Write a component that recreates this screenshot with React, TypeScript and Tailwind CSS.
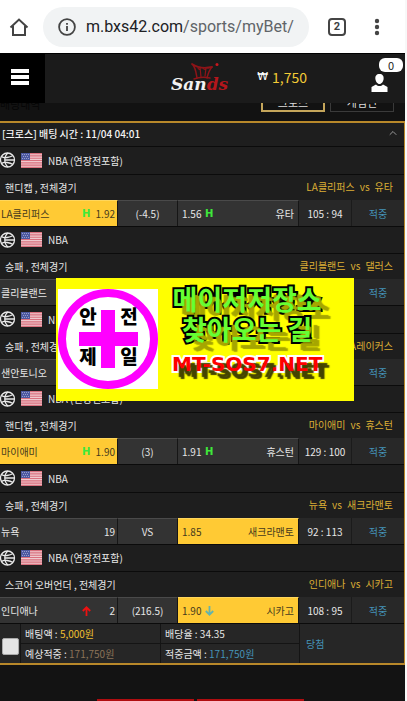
import clsx from "clsx";
import { ChevronUp } from "lucide-react";

type Mark = "H" | "up" | "down";

type Side = {
    name: string;
    value?: string;
    mark?: Mark;
    picked?: boolean;
};

type Match = {
    league: string;
    kind: string;
    home: Side;
    line?: string;
    away: Side;
    score?: string;
};

const matches: Match[] = [
    {
        league: "NBA (연장전포함)",
        kind: "핸디캡 , 전체경기",
        home: { name: "LA클리퍼스", value: "1.92", mark: "H", picked: true },
        line: "(-4.5)",
        away: { name: "유타", value: "1.56", mark: "H" },
        score: "105 : 94",
    },
    {
        league: "NBA",
        kind: "승패 , 전체경기",
        home: { name: "클리블랜드" },
        away: { name: "댈러스" },
    },
    {
        league: "NBA",
        kind: "승패 , 전체경기",
        home: { name: "샌안토니오" },
        away: { name: "LA레이커스" },
    },
    {
        league: "NBA (연장전포함)",
        kind: "핸디캡 , 전체경기",
        home: { name: "마이애미", value: "1.90", mark: "H", picked: true },
        line: "(3)",
        away: { name: "휴스턴", value: "1.91", mark: "H" },
        score: "129 : 100",
    },
    {
        league: "NBA",
        kind: "승패 , 전체경기",
        home: { name: "뉴욕", value: "19" },
        line: "VS",
        away: { name: "새크라맨토", value: "1.85", picked: true },
        score: "92 : 113",
    },
    {
        league: "NBA (연장전포함)",
        kind: "스코어 오버언더 , 전체경기",
        home: { name: "인디애나", value: "2", mark: "up" },
        line: "(216.5)",
        away: { name: "시카고", value: "1.90", mark: "down", picked: true },
        score: "108 : 95",
    },
];

function BrowserBar() {
    return (
        <div className="flex h-[53px] items-center bg-white pl-[9px] font-[Roboto,sans-serif] text-[#3c4043]">
            <button type="button" aria-label="Home" className="shrink-0">
                <svg width="20" height="20" viewBox="0 0 20 20" fill="none" stroke="#444" strokeWidth="2">
                    <path d="M1.5 10.5 10 2.500l8.500 8M4 9v9h12V9" />
                </svg>
            </button>
            <a href="#url" className="ml-3.5 flex h-10 min-w-0 flex-1 items-center gap-2.5 rounded-full bg-[#f1f3f4] pl-[15px]">
                <svg width="18" height="18" viewBox="0 0 18 18" fill="none" stroke="#444" className="shrink-0">
                    <circle cx="9" cy="9" r="7.900" strokeWidth="1.800" />
                    <path d="M9 8v5M9 5v1.800" strokeWidth="1.800" />
                </svg>
                <span className="text-base whitespace-nowrap text-[#606468]">
                    <span className="text-[#202124]">m.bxs42.com</span>/sports/myBet/
                </span>
            </a>
            <button type="button" className="ml-[19px] size-[18px] shrink-0 rounded-[4px] border-2 border-[#444] text-[11px] leading-[14px] font-bold">
                2
            </button>
            <button type="button" aria-label="Menu" className="mr-[25px] ml-7 shrink-0">
                <svg width="6" height="18" viewBox="0 0 6 18" fill="#444">
                    <circle cx="3" cy="3" r="2.200" />
                    <circle cx="3" cy="9" r="2.200" />
                    <circle cx="3" cy="15" r="2.200" />
                </svg>
            </button>
        </div>
    );
}

function Logo() {
    return (
        <svg width="62" height="34" viewBox="0 0 62 34" role="img" aria-label="Sands">
            <g fill="none" stroke="#8e1418" strokeLinecap="round">
                <path d="M21 2c5 3.500 13 4.500 20 3" strokeWidth="1.800" />
                <path d="M22 3c3 4 3 8 4 13M41 5c-3 3-4 7-5 11" strokeWidth="1.500" />
                <path d="M29 5l1 10M35 6l-1 8M27 6c1 2 2 2 2 0M32 6c1 2 3 2 3 0" strokeWidth="1.200" />
                <path d="M23 17c5-2 11-2 16-1" strokeWidth="1.400" />
            </g>
            <circle cx="46" cy="2.500" r="1.500" fill="#c8181e" />
            <text x="0" y="28" fill="#f2f2f2" className="font-['DejaVu_Serif',serif] text-[17px] font-bold italic">
                San<tspan fill="#b3161c">ds</tspan>
            </text>
        </svg>
    );
}

function Header() {
    return (
        <header className="flex h-[50px] items-center border-t border-black bg-[#1b1b1b]">
            <button type="button" aria-label="메뉴" className="flex h-full w-[45px] shrink-0 flex-col justify-center gap-[2px] bg-black pb-[3px] pl-[11px]">
                <span className="h-1 w-[18px] bg-white" />
                <span className="h-1 w-[18px] bg-white" />
                <span className="h-1 w-[18px] bg-white" />
            </button>
            <a href="#home" className="ml-auto">
                <Logo />
            </a>
            <div className="ml-6 flex items-center gap-1 pb-[3px] text-[14px]">
                <span className="font-['DejaVu_Sans',sans-serif] text-[11px] text-white">₩</span>
                <span className="text-[#f4cc36]">1,750</span>
            </div>
            <button type="button" aria-label="내 정보" className="relative mr-[17px] ml-16 shrink-0">
                <svg width="17" height="18" viewBox="0 0 17 18" fill="#fff" className="mt-2">
                    <path d="M8.500 0C11.500 0 13 2 12.600 5c-.3 2.500-2 5-4.100 5S4.700 7.500 4.400 5C4 2 5.500 0 8.500 0Z" />
                    <path d="M.5 18v-5L5 10.500c2 2 5 2 7 0l4.500 2.500v5Z" />
                </svg>
                <span className="absolute -top-2 left-2 h-[14px] w-6 rounded-[6px] bg-white text-center text-[11px] leading-[14px] text-[#222]">
                    0
                </span>
            </button>
        </header>
    );
}

function Tabs() {
    return (
        <div className="flex h-[18px] items-end gap-[5px] overflow-hidden bg-[#121212] pr-[11px] pb-[9px] text-[11px] text-[#ddd]">
            <h1 className="mr-auto leading-4 text-[#050505]">배팅내역</h1>
            <button type="button" className="h-6 w-16 shrink-0 border-2 border-[#c4a55a] pt-1 leading-4">
                크로스
            </button>
            <button type="button" className="h-6 w-16 shrink-0 border border-[#3a3a3a] pt-1 leading-4">
                게임빈
            </button>
        </div>
    );
}

function BallIcon() {
    return (
        <svg width="16" height="16" viewBox="0 0 16 16" fill="none" stroke="#e8e8e8" strokeWidth="1.300" className="shrink-0">
            <circle cx="7.500" cy="8" r="7" />
            <path d="M5 8h9.500M8 1C5.500 3 4.800 5.500 4.800 8S5.500 13 8 15" />
            <path d="M1.500 4.500C4 6.500 10 5.500 13 3.500M1.500 11.500C4 9.500 10 10.500 13 12.500" />
        </svg>
    );
}

function FlagIcon() {
    return (
        <svg width="21" height="15" viewBox="0 0 21 15" className="shrink-0">
            <path d="M0 0h21v15H0z" fill="#efc9ce" />
            <path d="M0 .6h21M0 2.900h21M0 5.200h21M0 7.500h21M0 9.800h21M0 12.100h21M0 14.400h21" stroke="#d9707e" strokeWidth="1.150" />
            <path d="M0 0h9v7H0z" fill="#4d59a0" />
            <path d="M1 1.500h7M2 3.500h6M1 5.500h7" stroke="#a9afd6" strokeWidth=".8" strokeDasharray="1 1" />
        </svg>
    );
}

function MarkIcon({ mark }: { mark: Mark }) {
    if (mark === "H") {
        return <span className="w-[9px] font-['DejaVu_Sans',sans-serif] text-[10px] font-bold text-[#3fe83a]">H</span>;
    }
    return (
        <svg width="9" height="10" viewBox="0 0 9 10" fill="none" strokeWidth="1.800" stroke={mark === "up" ? "#ee1111" : "#63b3ad"}>
            <path d={mark === "up" ? "M4.500 10V1.500M.8 5l3.700-3.700L8.200 5" : "M4.500 0v8.500M.8 5l3.700 3.700L8.200 5"} />
        </svg>
    );
}

function SideCell({ side, away }: { side: Side; away?: boolean }) {
    return (
        <div
            className={clsx(
                "flex items-center gap-[2px] border-t border-r border-r-[#161616]",
                away ? "flex-row-reverse justify-end px-1" : "pr-[2px] pl-px",
                side.picked ? "border-t-[#ffd75c] bg-[#ffca34] text-[#463a1c]" : "border-t-[#4a4a4a] bg-[#333] text-[#e6e6e6]",
            )}
        >
            <span className={away ? "ml-auto" : "mr-auto"}>{side.name}</span>
            {side.mark && <MarkIcon mark={side.mark} />}
            {side.value && <span className={away ? "w-[21px]" : "w-[22px] text-right"}>{side.value}</span>}
        </div>
    );
}

function MatchGroup({ match }: { match: Match }) {
    return (
        <section className="group text-[10px]">
            <h3 className="flex h-7 items-center border-b border-[#0b0b0b] pb-px text-[#e6e6e6] group-even:h-[27px]">
                <BallIcon />
                <span className="ml-[5px] flex items-center gap-1.5">
                    <FlagIcon />
                    {match.league}
                </span>
            </h3>
            <div className="flex h-[25px] items-center justify-between pr-[11px] pl-[5px]">
                <span className="text-[#e6e6e6]">{match.kind}</span>
                <span className="pb-[3px] text-[#dcae35]">
                    {match.home.name}
                    <span className="mx-[5px]">vs</span>
                    {match.away.name}
                </span>
            </div>
            <div className="grid h-[27px] grid-cols-[118fr_60fr_121fr_53fr_52fr] border-b border-[#0b0b0b]">
                <SideCell side={match.home} />
                <div className="flex items-center justify-center border-t border-r border-t-[#4a4a4a] border-r-[#161616] bg-[#333] text-[#e6e6e6]">
                    {match.line}
                </div>
                <SideCell side={match.away} away />
                <div className="flex items-center justify-center border-r border-[#1b1b1b] bg-[#282828] text-[#e6e6e6]">{match.score}</div>
                <div className="flex items-center justify-center bg-[#282828] text-[#4593b8]">적중</div>
            </div>
        </section>
    );
}

function Summary() {
    return (
        <div className="grid grid-cols-[21fr_140fr_139fr_104fr] bg-[#262626] text-[10px] text-[#e6e6e6]">
            <label className="flex items-center border-r border-[#141414] pt-[6px] pl-[2px]">
                <input type="checkbox" aria-label="배팅 선택" className="size-[17px] appearance-none rounded-[2px] border border-[#aaa] bg-[#e4e4e4]" />
            </label>
            <div className="border-r border-[#141414]">
                <p className="h-5 border-b border-[#141414] pl-1 leading-[19px]">
                    배팅액 : <span className="text-[#f0c030]">5,000원</span>
                </p>
                <p className="h-[19px] pl-1 leading-[19px]">
                    예상적중 : <span className="text-[#8b7358]">171,750원</span>
                </p>
            </div>
            <div className="border-r border-[#141414]">
                <p className="h-5 border-b border-[#141414] pl-1 leading-[19px]">배당율 : 34.35</p>
                <p className="h-[19px] pl-1 leading-[19px]">
                    적중금액 : <span className="text-[#4593b8]">171,750원</span>
                </p>
            </div>
            <div className="flex items-center pl-1.5 text-[#4593b8]">당첨</div>
        </div>
    );
}

function Banner() {
    return (
        <a
            href="#banner"
            className="absolute top-[155px] left-[56px] flex h-[123px] w-[298px] bg-[#ffff00] pt-[11px] pl-[2px]"
        >
            <svg width="100" height="100" viewBox="0 0 100 100" className="shrink-0 bg-white">
                <circle cx="50" cy="50" r="46" fill="#fff" stroke="#ff00ff" strokeWidth="8" />
                <path d="M43 21h14v22h23v14H57v22H43V57H21V43h22z" fill="#ff00ff" />
                <g className="font-['Noto_Sans_CJK_KR',sans-serif] text-[19px] font-black" fill="#000" textAnchor="middle">
                    <text x="30" y="35">안</text>
                    <text x="71" y="35">전</text>
                    <text x="30" y="75">제</text>
                    <text x="71" y="75">일</text>
                </g>
            </svg>
            <div className="-mt-[5px] ml-[14px] text-center whitespace-nowrap">
                <p className="text-[27px] leading-[30px] font-bold text-[#66ff33] [-webkit-text-stroke:4px_#000] [paint-order:stroke_fill] [text-shadow:8px_8px_1px_#a6a600,10px_9px_1px_#a6a600]">
                    메이저저장소
                    <br />
                    찾아오는 길
                </p>
                <p className="mt-[6px] font-['DejaVu_Sans',sans-serif] text-[20px] leading-7 font-bold text-[#ff0000] [-webkit-text-stroke:4px_#fff] [paint-order:stroke_fill] [text-shadow:5px_6px_1px_#444400,7px_8px_1px_#444400]">
                    MT-SOS7.NET
                </p>
            </div>
        </a>
    );
}

export default function App() {
    return (
        <div className="min-h-screen bg-[#f8f8f8] pr-[2px] font-['Noto_Sans_CJK_KR',sans-serif]">
            <BrowserBar />
            <div className="flex min-h-[648px] flex-col bg-[#131313]">
                <Header />
                <Tabs />
                <main className="relative border-t-2 border-r border-b-2 border-[#b8882a] bg-[#1e1e1e]">
                    <h2 className="flex h-6 items-center justify-between border-b border-[#0b0b0b] pr-[5px] pb-[3px] pl-[2px] text-[10px] font-medium text-[#f4f4f4]">
                        [크로스] 배팅 시간 : 11/04 04:01
                        <ChevronUp className="size-3 text-[#999]" strokeWidth={2} />
                    </h2>
                    <div>
                        {matches.map((match) => (
                            <MatchGroup key={match.home.name} match={match} />
                        ))}
                    </div>
                    <Summary />
                    <Banner />
                </main>
                <div className="mt-auto flex h-[2px] justify-center gap-[3px] overflow-hidden pr-1">
                    <button type="button" aria-label="전체선택" className="h-8 w-[97px] bg-[#b00d10]" />
                    <button type="button" aria-label="선택삭제" className="h-8 w-[107px] bg-[#b00d10]" />
                </div>
            </div>
        </div>
    );
}
